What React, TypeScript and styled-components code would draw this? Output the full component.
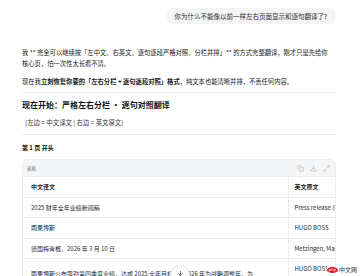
import styled, { createGlobalStyle } from 'styled-components';
import { Copy, Download, Maximize2, ArrowDown } from 'lucide-react';

const GlobalStyle = createGlobalStyle`
    html, body {
        margin: 0;
        padding: 0;
        background: #ffffff;
        overflow: hidden;
    }
    body {
        font-family: "Noto Sans CJK SC", "Noto Sans", sans-serif;
        color: #1a1a1a;
    }
`;

const Page = styled.div`
    width: 361px;
    height: 276px;
    overflow: hidden;
    position: relative;
`;

const Thread = styled.div`
    display: flex;
    flex-direction: column;
    padding: 8px 25px 0 22px;
`;

const UserRow = styled.div`
    display: flex;
    justify-content: flex-end;
    padding-right: 1px;
`;

const Bubble = styled.div`
    height: 16px;
    display: flex;
    align-items: center;
    padding: 0 8px 0 7px;
    border-radius: 6px;
    background: #f4f4f4;
    font-size: 6.5px;
    color: #2a2a2a;
`;

const Para = styled.p<{ $top?: number }>`
    margin: ${p => p.$top ?? 0}px 0 0;
    max-width: 309px;
    font-size: 6.3px;
    line-height: 11px;
    color: #1a1a1a;
`;

const Strong = styled.b`
    font-weight: 700;
`;

const Rule = styled.hr<{ $top: number }>`
    margin: ${p => p.$top}px 0 0;
    border: 0;
    border-top: 1px solid #ededed;
    height: 0;
`;

const Heading = styled.h3`
    margin: 6px 0 0;
    font-size: 8px;
    line-height: 12px;
    font-weight: 700;
    color: #111;
`;

const Note = styled.div`
    margin-top: 7px;
    padding-left: 3px;
    font-size: 6.4px;
    line-height: 10px;
    color: #333;
`;

const SubHeading = styled.h4`
    margin: 8px 0 0;
    font-size: 6px;
    line-height: 10px;
    font-weight: 700;
    color: #111;
`;

const TableCard = styled.div`
    margin-top: 6px;
    border: 1px solid #ececec;
    border-radius: 5px;
    overflow: hidden;
`;

const TableBar = styled.div`
    height: 16px;
    display: flex;
    align-items: center;
    justify-content: space-between;
    padding: 0 5px 0 4px;
    background: #f4f5f6;
    border-bottom: 1px solid #ececec;
`;

const BarLabel = styled.span`
    font-size: 4.5px;
    color: #666;
`;

const BarTools = styled.div`
    display: flex;
    gap: 6px;
    color: #b4b4b4;
`;

const Table = styled.table`
    width: 490px;
    border-collapse: collapse;
    table-layout: fixed;
`;

const Cell = styled.td<{ $head?: boolean }>`
    padding: 5px 8px;
    font-size: 6px;
    line-height: 9.5px;
    font-weight: ${p => (p.$head ? 700 : 400)};
    color: #1f1f1f;
    vertical-align: middle;
    border-bottom: 1px solid #ececec;
    border-right: 1px solid #ececec;
    white-space: nowrap;

    &:last-child {
        padding-left: 6px;
        border-right: 0;
    }
`;

const ScrollButton = styled.div`
    position: absolute;
    left: 170px;
    top: 265px;
    width: 20px;
    height: 20px;
    border-radius: 50%;
    background: #fff;
    border: 1px solid #e3e3e3;
    box-shadow: 0 1px 3px rgba(0, 0, 0, 0.08);
    display: flex;
    justify-content: center;
    padding-top: 4px;
    box-sizing: border-box;
    color: #222;
`;

const Watermark = styled.div`
    position: absolute;
    right: 4px;
    bottom: 2px;
    display: flex;
    align-items: center;
    gap: 1px;
    font-size: 6px;
    line-height: 8px;
    color: #333;
    background: rgba(255, 255, 255, 0.85);
`;

const PhpPill = styled.span`
    display: inline-flex;
    align-items: center;
    justify-content: center;
    width: 11px;
    height: 6px;
    border-radius: 50%;
    background: #d4141f;
    color: #fff;
    font-family: "DejaVu Sans", sans-serif;
    font-style: italic;
    font-size: 4px;
    line-height: 6px;
`;

const rows: [string, string][] = [
    ['2025 财年全年业绩新闻稿', 'Press release (FY 2025)'],
    ['雨果博斯', 'HUGO BOSS'],
    ['德国梅青根，2026 年 3 月 10 日', 'Metzingen, March 10, 2026'],
];

export default function App() {
    return (
        <Page>
            <GlobalStyle />
            <Thread>
                <UserRow>
                    <Bubble>你为什么不能像以前一样左右页面显示和逐句翻译了?</Bubble>
                </UserRow>
                <Para $top={23}>
                    我 ** 完全可以继续按「左中文、右英文、逐句逐段严格对照、分栏并排」** 的方式完整翻译，刚才只是先给你核心页，怕一次性太长看不清。
                </Para>
                <Para $top={7}>
                    现在我<Strong>立刻恢复你要的「左右分栏 + 逐句逐段对照」格式</Strong>，纯文本也能清晰并排，不丢任何内容。
                </Para>
                <Rule $top={5} />
                <Heading>现在开始：严格左右分栏 · 逐句对照翻译</Heading>
                <Note>(左边 = 中文译文 | 右边 = 英文原文)</Note>
                <Rule $top={6} />
                <SubHeading>第 1 页 开头</SubHeading>
                <TableCard>
                    <TableBar>
                        <BarLabel>表格</BarLabel>
                        <BarTools>
                            <Copy size={7} strokeWidth={2} />
                            <Download size={7} strokeWidth={2} />
                            <Maximize2 size={7} strokeWidth={2} />
                        </BarTools>
                    </TableBar>
                    <Table>
                        <colgroup>
                            <col style={{ width: 265 }} />
                            <col style={{ width: 225 }} />
                        </colgroup>
                        <tbody>
                            <tr>
                                <Cell $head>中文译文</Cell>
                                <Cell $head>英文原文</Cell>
                            </tr>
                            {rows.map(([zh, en]) => (
                                <tr key={zh}>
                                    <Cell>{zh}</Cell>
                                    <Cell>{en}</Cell>
                                </tr>
                            ))}
                            <tr>
                                <Cell>
                                    雨果博斯公布强劲第四季度业绩，达成 2025 全年目标 ——2026 年为战略调整年，为
                                    <br />
                                    导向增长奠定基础
                                </Cell>
                                <Cell>
                                    HUGO BOSS REPORTS STRONG FOURTH QUARTER,
                                    <br />
                                    2026 MARKS YEAR OF STRATEGIC
                                    <br />
                                    RECALIBRATION
                                </Cell>
                            </tr>
                        </tbody>
                    </Table>
                </TableCard>
            </Thread>
            <ScrollButton>
                <ArrowDown size={7} strokeWidth={2} />
            </ScrollButton>
            <Watermark>
                <PhpPill>php</PhpPill>
                中文网
            </Watermark>
        </Page>
    );
}
